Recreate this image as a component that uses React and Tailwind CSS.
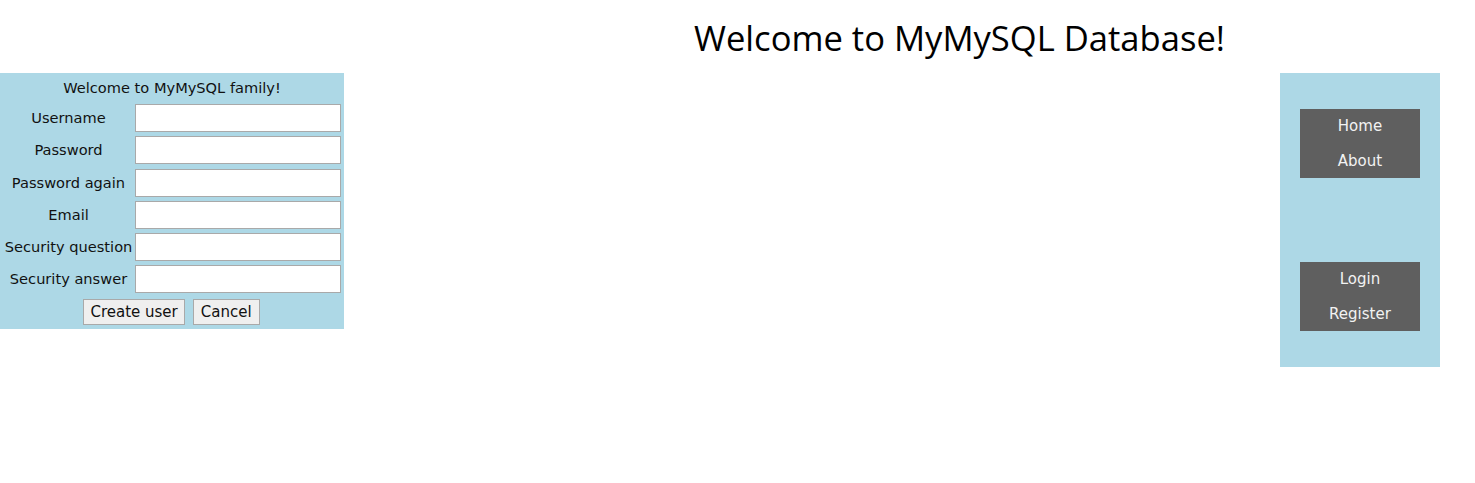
const fields = [
  'Username',
  'Password',
  'Password again',
  'Email',
  'Security question',
  'Security answer',
];

const NavBox = ({ items }) => (
  <div className="w-[120px] bg-[#5f5f5f] flex flex-col">
    {items.map((item) => (
      <a key={item} className="h-[34.5px] leading-[34.5px] text-center text-[#f2f2f2] text-[15px]">
        {item}
      </a>
    ))}
  </div>
);

export default function App() {
  return (
    <div className="w-[1475px] h-[483px] bg-white" style={{ fontFamily: '"DejaVu Sans", Verdana, sans-serif' }}>
      <h1
        className="pl-[694px] pt-[16px] h-[73px] text-[34.6px] leading-[44px] text-black"
        style={{ fontFamily: '"Open Sans", "Noto Sans", sans-serif' }}
      >
        Welcome to MyMySQL Database!
      </h1>
      <div className="flex items-start">
        <div className="w-[344px] bg-[#add8e6] pt-[5px] pb-[4px] text-[14.6px] text-[#111]">
          <div className="text-center h-[26px] leading-[20px]">Welcome to MyMySQL family!</div>
          <div className="flex flex-col gap-[4.25px] pl-[2px]">
            {fields.map((f) => (
              <div key={f} className="flex items-center h-[28px]">
                <label className="w-[133px] text-center whitespace-nowrap">{f}</label>
                <input className="w-[206px] h-[28px] bg-white border border-[#a9a9a9]" />
              </div>
            ))}
          </div>
          <div className="flex justify-center gap-[8px] mt-[5.5px] pr-[1px]">
            <button className="h-[26px] px-[6px] bg-[#efefef] border border-[#a9a9a9] text-[15px]">Create user</button>
            <button className="h-[26px] px-[7px] bg-[#efefef] border border-[#a9a9a9] text-[15px]">Cancel</button>
          </div>
        </div>
        <div className="flex-1" />
        <div className="w-[160px] mr-[35px] bg-[#add8e6] pt-[36px] pb-[36px] flex flex-col items-center gap-[84px]">
          <NavBox items={['Home', 'About']} />
          <NavBox items={['Login', 'Register']} />
        </div>
      </div>
    </div>
  );
}
